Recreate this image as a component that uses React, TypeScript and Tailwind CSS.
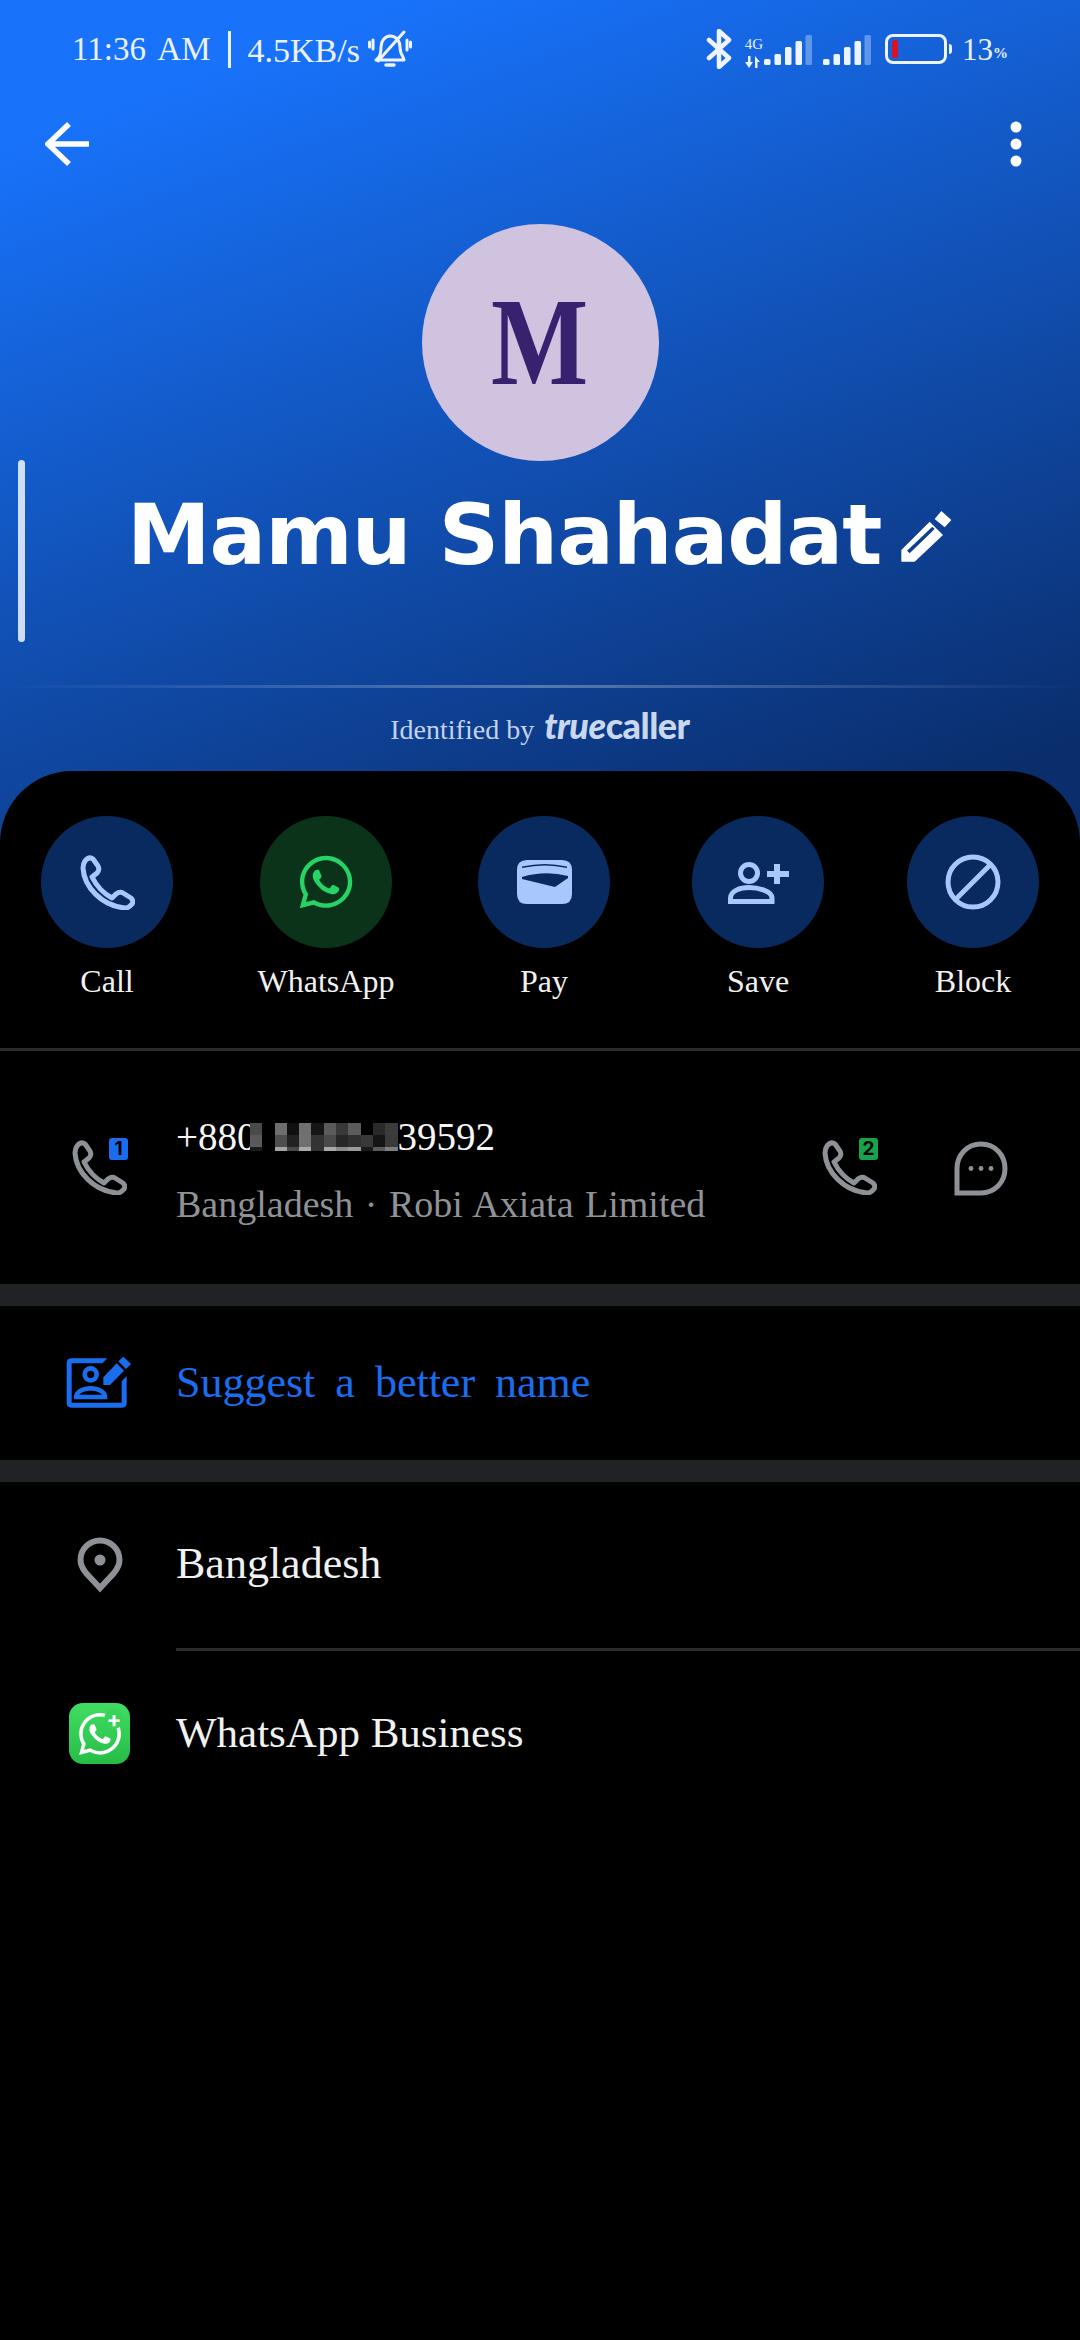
import { FaWhatsapp } from "react-icons/fa";

// Pixelated part of the phone number, one entry per column (top, middle, bottom)
const mosaic = [
  ["bg-[#4a4a4a]", "bg-[#5a5a5a]", "bg-[#1a1a1a]"],
  ["bg-[#000000]", "bg-[#000000]", "bg-[#000000]"],
  ["bg-[#6e6e6e]", "bg-[#4e4e4e]", "bg-[#a5a5a5]"],
  ["bg-[#101010]", "bg-[#222222]", "bg-[#4a4a4a]"],
  ["bg-[#707070]", "bg-[#707070]", "bg-[#a8a8a8]"],
  ["bg-[#161616]", "bg-[#333333]", "bg-[#333333]"],
  ["bg-[#5a5a5a]", "bg-[#4a4a4a]", "bg-[#a8a8a8]"],
  ["bg-[#383838]", "bg-[#262626]", "bg-[#8a8a8a]"],
  ["bg-[#5c5c5c]", "bg-[#303030]", "bg-[#9a9a9a]"],
  ["bg-[#000000]", "bg-[#383838]", "bg-[#1a1a1a]"],
  ["bg-[#2a2a2a]", "bg-[#151515]", "bg-[#5a5a5a]"],
  ["bg-[#3c3c3c]", "bg-[#3a3a3a]", "bg-[#7e7e7e]"],
];

function Signal() {
  return (
    <svg width="48" height="30" viewBox="0 0 48 30" fill="#eef4ff">
      <rect x="0" y="24" width="6.5" height="6" rx="1.5" />
      <rect x="10.5" y="19" width="6.5" height="11" rx="1.5" />
      <rect x="21" y="12" width="6.5" height="18" rx="1.5" />
      <rect x="31.5" y="6" width="6.5" height="24" rx="1.5" />
      <rect x="41.5" y="0" width="6.5" height="30" rx="1.5" opacity="0.35" />
    </svg>
  );
}

function MutedBell() {
  return (
    <svg width="44" height="38" viewBox="0 0 44 38" fill="none" stroke="#eef4ff" strokeWidth="3" strokeLinecap="round" strokeLinejoin="round">
      <path d="M11 27c2-3 2-6 2-10 0-6 4-11 9-11s10 4 10 11c0 4 1 7 3 10l1 3H8z" />
      <path d="M10 31L36 2" />
      <path d="M5 10v9M1.5 12v5M39 10v10M42.5 12v5" />
      <path d="M18 35h8" strokeWidth="3.5" />
    </svg>
  );
}

function StatusBar() {
  return (
    <div className="flex h-[98px] items-center pl-[72px] pr-[72px] text-[33px] text-[#eaf1ff]">
      <span className="mt-[2px] [word-spacing:5px]">11:36 AM</span>
      <span className="ml-[17px] mr-[17px] h-[37px] w-[3px] bg-[#eaf1ff]" />
      <span className="mt-[2px] text-[34px]">4.5KB/s</span>
      <span className="ml-[8px]">
        <MutedBell />
      </span>
      <span className="ml-auto">
        <svg width="26" height="40" viewBox="0 0 26 40" fill="none" stroke="#eef4ff" strokeWidth="4.5" strokeLinejoin="round" strokeLinecap="round">
          <path d="M3 11l20 18-10 9V2l10 9L3 29" />
        </svg>
      </span>
      <div className="ml-[12px] flex h-[40px] w-[20px] flex-col items-center justify-end">
        <span className="text-[15px] leading-[16px]">4G</span>
        <svg className="mb-[1px] mt-[4px]" width="18" height="12" viewBox="0 0 18 12" fill="#eef4ff">
          <path d="M0 6h3V0h2.5v6H8l-4 6zM10 0l5 6h-2.5v6H10z" />
        </svg>
      </div>
      <div className="mt-[1px]">
        <Signal />
      </div>
      <div className="ml-[11px] mt-[1px]">
        <Signal />
      </div>
      <div className="ml-[14px] flex items-center">
        <div className="flex h-[30px] w-[62px] items-center rounded-[8px] border-[3px] border-[#eef4ff] pl-[4px]">
          <span className="h-[18px] w-[6px] rounded-[2px] bg-[#d81224]" />
        </div>
        <span className="ml-[2px] h-[10px] w-[3px] rounded-r-full bg-[#eef4ff]" />
      </div>
      <span className="ml-[10px] mt-[2px] text-[31px]">13</span>
      <span className="mt-[8px] text-[15px] font-bold">%</span>
    </div>
  );
}

function PhoneGlyph({ color, size = 55 }: { color: string; size?: number }) {
  return (
    <svg width={size} height={size} viewBox="0 0 55 55" fill="none" stroke={color} strokeWidth="5" strokeLinejoin="round">
      <path d="M5 6Q9 1 13 4L18 11Q20 15 17 18L12 22Q19 36 32 43L36 39Q40 36 43 38L51 43Q54 46 52 49L50 51Q48 53 45 53C22 51 4 32 3 13Q3 9 5 6Z" />
    </svg>
  );
}

function ActionItem({ width, label, tint, children }: { width: string; label: string; tint: string; children: React.ReactNode }) {
  return (
    <div className={`flex flex-col items-center ${width}`}>
      <div className={`flex h-[132px] w-[132px] items-center justify-center rounded-full ${tint}`}>{children}</div>
      <span className="mt-[13px] text-[32px] leading-[40px] text-[#f1f1f1]">{label}</span>
    </div>
  );
}

function Actions() {
  const accent = "#a8c7fa";
  return (
    <div className="flex h-[277px] pt-[45px]">
      <ActionItem width="w-[214px]" label="Call" tint="bg-[#082a5e]">
        <PhoneGlyph color={accent} />
      </ActionItem>
      <ActionItem width="w-[224px]" label="WhatsApp" tint="bg-[#0a3319]">
        <FaWhatsapp size={60} color="#25d366" />
      </ActionItem>
      <ActionItem width="w-[212px]" label="Pay" tint="bg-[#082a5e]">
        <svg width="55" height="44" viewBox="0 0 55 44" fill={accent}>
          <path fillRule="evenodd" d="M10 0H45Q55 0 55 10V34Q55 44 45 44H10Q0 44 0 34V10Q0 0 10 0ZM5 6.5V8Q28 3 50 8V6.5Q28 1.5 5 6.5ZM5 17Q28 10 51 16V18L38 27L5 19Z" />
        </svg>
      </ActionItem>
      <ActionItem width="w-[216px]" label="Save" tint="bg-[#082a5e]">
        <svg width="61" height="44" viewBox="0 0 61 44" fill="none" stroke={accent} strokeWidth="5">
          <circle cx="21" cy="13" r="8.5" />
          <path d="M2.5 44V38C2.5 31 12 27.5 21 27.5S44 31 44 38V44M2.5 41.5H44" />
          <path d="M49 4V24M39 14H61" strokeWidth="6" />
        </svg>
      </ActionItem>
      <ActionItem width="w-[214px]" label="Block" tint="bg-[#082a5e]">
        <svg width="56" height="56" viewBox="0 0 56 56" fill="none" stroke={accent} strokeWidth="5">
          <circle cx="28" cy="28" r="25" />
          <path d="M10 46L46 10" />
        </svg>
      </ActionItem>
    </div>
  );
}

function NumberRow() {
  return (
    <div className="flex h-[233px] items-start">
      <div className="relative ml-[72px] mt-[89px] h-[56px] w-[56px]">
        <PhoneGlyph color="#8e9297" />
        <span className="absolute right-0 top-[-2px] flex h-[22px] w-[19px] items-center justify-center rounded-[3px] bg-[#1b6df0] font-['Inter',sans-serif] text-[19px] font-bold text-black">1</span>
      </div>
      <div className="ml-[48px] mt-[62px]">
        <div className="flex h-[48px] items-center text-[39px] leading-[48px] text-[#f6f6f6]">
          <span className="w-[74px] whitespace-nowrap">+880</span>
          <div className="relative flex h-[28px]">
            {mosaic.map((col, i) => (
              <div key={i} className="flex w-[12.3px] flex-col">
                <div className={`h-[12px] ${col[0]}`} />
                <div className={`h-[12px] ${col[1]}`} />
                <div className={`h-[4px] ${col[2]}`} />
              </div>
            ))}
          </div>
          <span>39592</span>
        </div>
        <div className="mt-[19px] text-[38px] leading-[48px] text-[#8f9296] [word-spacing:2px]">Bangladesh · Robi Axiata Limited</div>
      </div>
      <div className="relative ml-auto mt-[89px] h-[56px] w-[56px]">
        <PhoneGlyph color="#8e9297" />
        <span className="absolute right-0 top-[-2px] flex h-[22px] w-[19px] items-center justify-center rounded-[3px] bg-[#16a34a] font-['Inter',sans-serif] text-[19px] font-bold text-black">2</span>
      </div>
      <svg className="ml-[76px] mr-[72px] mt-[90px]" width="54" height="55" viewBox="0 0 54 55" fill="none" stroke="#8e9297" strokeWidth="5">
        <path d="M27 3C13 3 3 14 3 27.5V52H27C41 52 51 41 51 27.5S41 3 27 3Z" />
        <g fill="#8e9297" stroke="none">
          <circle cx="17" cy="27.5" r="2.4" />
          <circle cx="27" cy="27.5" r="2.4" />
          <circle cx="37" cy="27.5" r="2.4" />
        </g>
      </svg>
    </div>
  );
}

function SuggestRow() {
  return (
    <div className="flex h-[154px] items-start">
      <svg className="ml-[50px] mt-[34px]" width="100" height="80" viewBox="0 0 300 240" fill="#1b6df0">
        <path d="M172 55H64Q50 55 50 69V189Q50 203 64 203H216Q230 203 230 189V108L215 124V188H65V70H157Z" />
        <path fillRule="evenodd" d="M122 78A25 25 0 1 0 122 128A25 25 0 1 0 122 78ZM122 92A11 11 0 1 1 122 114A11 11 0 1 1 122 92Z" />
        <path fillRule="evenodd" d="M72 178V170C72 150 100 138 122 138S172 150 172 170V178ZM88 164H156C150 156 135 152 122 152S94 156 88 164Z" />
        <path d="M160 112L200 70L222 92L180 135H160ZM205 64L220 50L243 72L228 87Z" />
      </svg>
      <span className="ml-[26px] mt-[50px] text-[44px] leading-[54px] text-[#1b6df0] [word-spacing:9px]">Suggest a better name</span>
    </div>
  );
}

function DetailRow({ icon, text, height, size }: { icon: React.ReactNode; text: string; height: string; size: string }) {
  return (
    <div className={`flex items-center ${height}`}>
      <div className="ml-[69px] mr-[46px] flex w-[61px] justify-center">{icon}</div>
      <span className={`${size} mb-[2px] leading-[54px] text-[#f1f1f1]`}>{text}</span>
    </div>
  );
}

export default function App() {
  return (
    <div className="relative h-[2340px] w-[1080px] overflow-hidden bg-black font-['Liberation_Serif',serif]">
      <header className="h-[851px] bg-[linear-gradient(160deg,#1872fa_12%,#0a2d6b_92%)]">
        <StatusBar />
        <div className="flex h-[92px] items-center justify-between pl-[45px] pr-[58px]">
          <svg width="44" height="44" viewBox="0 0 44 44" fill="none" stroke="#ffffff" strokeWidth="5.5">
            <path d="M44 22H3M24 2L3 22l21 20" />
          </svg>
          <svg width="12" height="46" viewBox="0 0 12 46" fill="#ffffff">
            <circle cx="6" cy="6" r="5.5" />
            <circle cx="6" cy="23" r="5.5" />
            <circle cx="6" cy="40" r="5.5" />
          </svg>
        </div>
        <div className="mx-auto mt-[34px] flex h-[237px] w-[237px] items-center justify-center rounded-full bg-[#cfc3e0]">
          <span className="scale-x-[0.83] text-[124px] font-bold leading-none text-[#38226f]">M</span>
        </div>
        <div className="mt-[28px] flex h-[92px] items-center pl-[127px]">
          <span className="font-['DejaVu_Sans',sans-serif] text-[84px] font-bold leading-[92px] tracking-[-1px] text-white">Mamu Shahadat</span>
          <svg className="ml-[2px]" width="90" height="80" viewBox="0 0 270 240" fill="#ffffff">
            <path fillRule="evenodd" d="M55 165L140 80L180 120L95 200H55ZM72 167L80 175L155 102L148 95Z" />
            <path d="M155 72L175 48L205 75L185 97Z" />
          </svg>
        </div>
        <div className="mt-[104px] h-[3px] bg-gradient-to-r from-transparent via-white/30 to-transparent" />
        <div className="mt-[19px] flex items-baseline justify-center">
          <span className="text-[28px] text-[#c3d3ec]">Identified by</span>
          <span className="ml-[10px] font-['Lato',sans-serif] text-[36px] font-black leading-[36px] tracking-[-0.5px] text-[#c9d8ee]">
            <span className="italic">true</span>caller
          </span>
        </div>
      </header>

      <main className="relative -mt-[80px] h-[1570px] rounded-t-[72px] bg-black">
        <Actions />
        <div className="h-[3px] bg-[#2a2b2d]" />
        <NumberRow />
        <div className="h-[22px] bg-[#202225]" />
        <SuggestRow />
        <div className="h-[22px] bg-[#202225]" />
        <DetailRow
          height="h-[166px]"
          size="text-[44px]"
          text="Bangladesh"
          icon={
            <svg width="46" height="56" viewBox="0 0 46 56" fill="none" stroke="#8e9297" strokeWidth="6">
              <path d="M23 51L9 36C5 31 3.5 28 3.5 23A19.5 19.5 0 0 1 42.5 23C42.5 28 41 31 37 36Z" />
              <circle cx="23" cy="23" r="5.5" fill="#8e9297" stroke="none" />
            </svg>
          }
        />
        <div className="ml-[176px] h-[3px] bg-[#2a2b2e]" />
        <DetailRow
          height="h-[165px]"
          size="text-[43px]"
          text="WhatsApp Business"
          icon={
            <div className="relative flex h-[61px] w-[61px] items-center justify-center rounded-[14px] bg-gradient-to-b from-[#41dd62] to-[#26bd47]">
              <FaWhatsapp size={48} color="#ffffff" />
              <span className="absolute right-[6px] top-[6px] flex h-[20px] w-[20px] items-center justify-center rounded-full bg-[#38d25a] font-['Inter',sans-serif] text-[22px] font-bold leading-none text-white">+</span>
            </div>
          }
        />
      </main>

      {/* scroll indicator along the header */}
      <div className="absolute left-[18px] top-[460px] h-[182px] w-[7px] rounded-full bg-white/80" />
    </div>
  );
}
